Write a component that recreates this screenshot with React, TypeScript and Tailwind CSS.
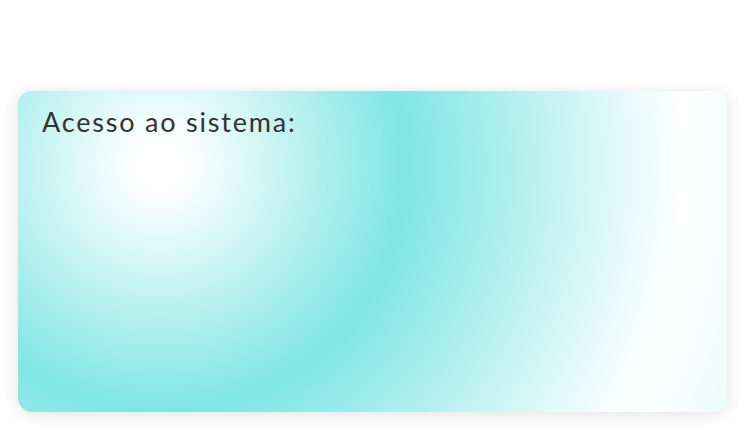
export default function App() {
  return (
    <div className="w-[745px] h-[430px] bg-white pt-[91px] px-[18px]">
      <div className="h-[321px] w-[709px] rounded-[14px] shadow-[0_2px_16px_rgba(0,0,0,0.12)] bg-[radial-gradient(circle_at_142px_74px,#ffffff_0px,#ffffff_25px,#80e5e5_245px,#ffffff_525px,#e8fafa_640px)] px-6 pt-[12px]">
        <h1 className="text-[27px] leading-[38px] text-[#333] tracking-[1.8px]" style={{ fontFamily: 'Lato, "Liberation Sans", sans-serif' }}>
          Acesso ao sistema:
        </h1>
      </div>
    </div>
  );
}
